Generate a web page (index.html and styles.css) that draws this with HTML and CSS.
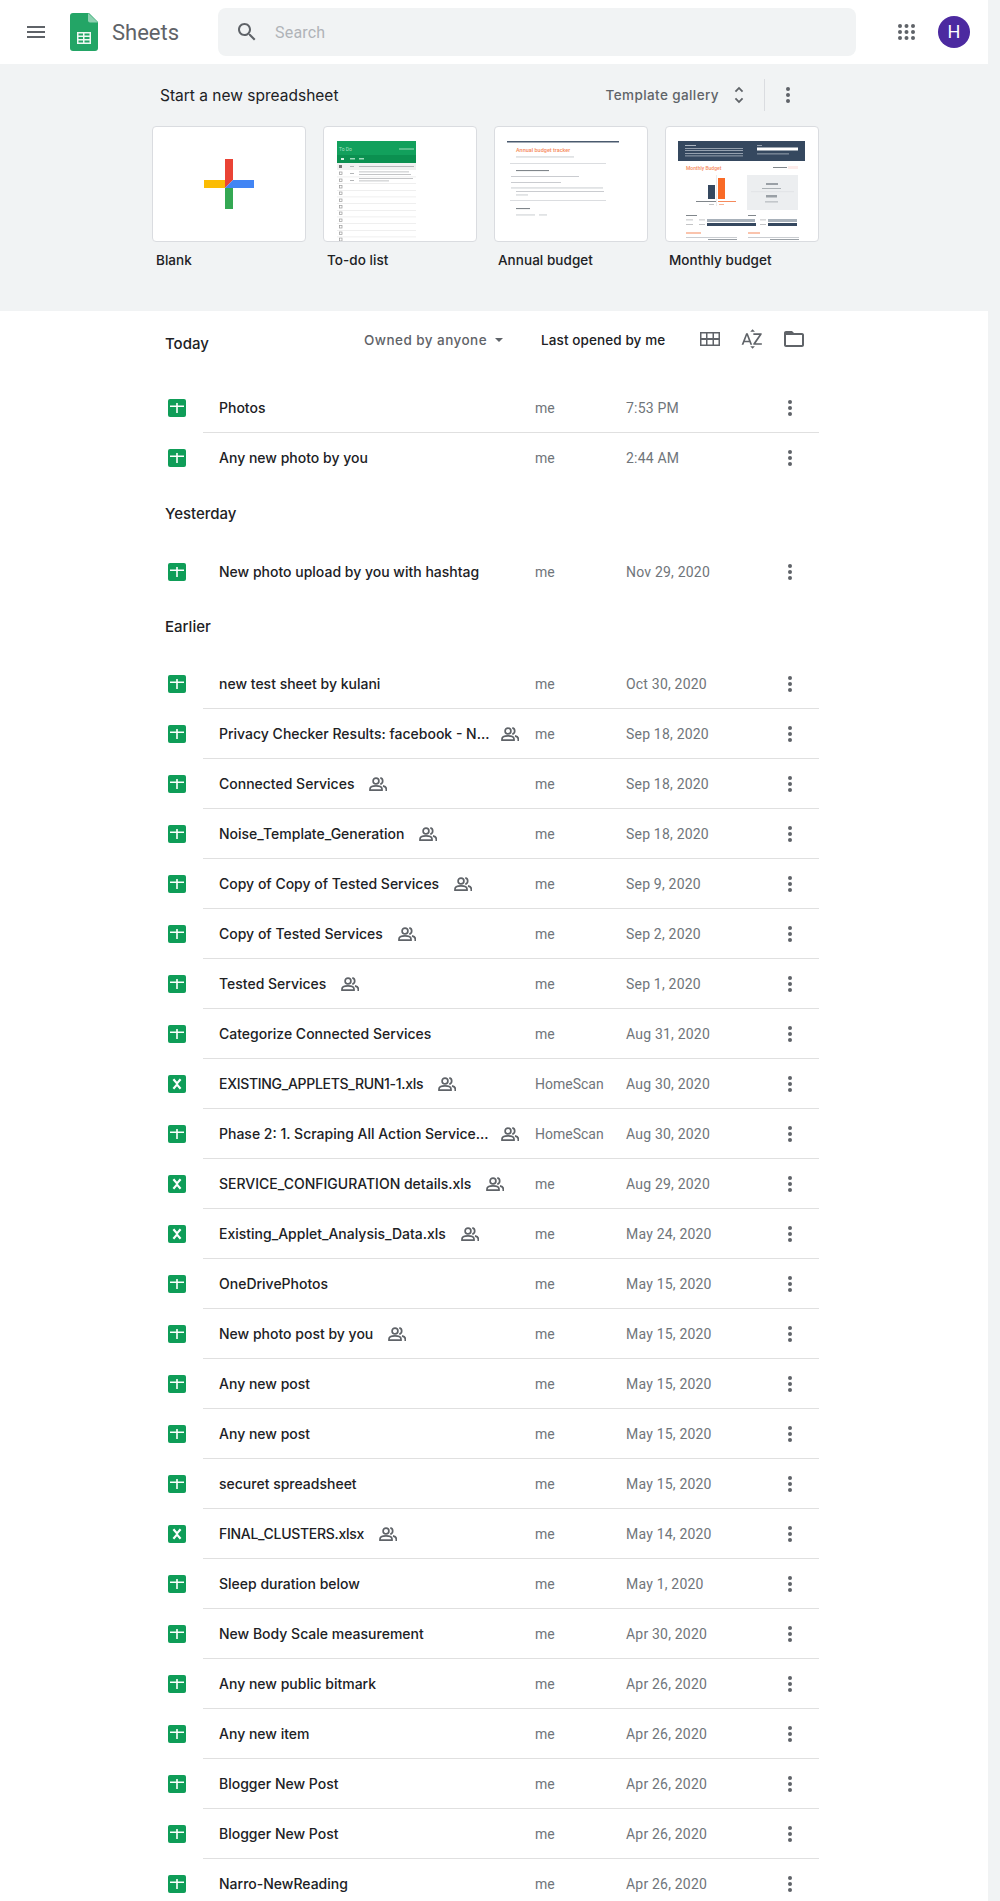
FILE: index.html
```html
<!DOCTYPE html>
<html lang="en">
<head>
    <meta charset="UTF-8">
    <title>Google Sheets</title>
    <link rel="stylesheet" href="styles.css">
</head>
<body>
    <svg class="defs" width="0" height="0">
        <symbol id="i-sheet" viewBox="0 0 18 18">
            <rect width="18" height="18" rx="2" fill="#0f9d58"/>
            <path d="M8.200 4h1.600v2.500H16v1.600H9.800V14H8.200V8.100H2V6.500h6.200z" fill="#fff"/>
        </symbol>
        <symbol id="i-excel" viewBox="0 0 18 18">
            <rect width="18" height="18" rx="2" fill="#0f9d58"/>
            <path d="M5.400 4.200l3.600 4.200 3.600-4.200M5.400 13.800l3.600-4.200 3.600 4.200" fill="none"/>
        </symbol>
        <symbol id="i-shared" viewBox="0 0 18 14">
            <g fill="none" stroke="#5f6368" stroke-width="1.700">
                <circle cx="7" cy="4" r="2.900"/>
                <path d="M1 13.100v-1.200c0-2 3-3.100 6-3.100s6 1.100 6 3.100v1.200z"/>
                <path d="M11.300.9a3.200 3.200 0 0 1 0 6.200"/>
                <path d="M14 8.900c2 .5 3.300 1.500 3.300 3V14"/>
            </g>
        </symbol>
        <symbol id="i-more" viewBox="0 0 4 16">
            <circle cx="2" cy="2" r="2" fill="#5f6368"/>
            <circle cx="2" cy="8" r="2" fill="#5f6368"/>
            <circle cx="2" cy="14" r="2" fill="#5f6368"/>
        </symbol>
    </svg>

    <div class="page">
        <header class="topbar">
            <svg class="menu-icon" viewBox="0 0 24 24"><path d="M3 18h18v-2H3v2zm0-5h18v-2H3v2zm0-7v2h18V6H3z"/></svg>
            <svg class="logo" viewBox="0 0 28 38">
                <path d="M3 0h16l9 9v26a3 3 0 0 1-3 3H3a3 3 0 0 1-3-3V3a3 3 0 0 1 3-3z" fill="#23a566"/>
                <path d="M18 0l10 9.500h-8a2 2 0 0 1-2-2z" fill="#8ed1b1"/>
                <path d="M7 19h14v12H7zm1.500 1.500v2h4.500v-2zm6 0v2h5v-2zm-6 3.500v2h4.500v-2zm6 0v2h5v-2zm-6 3.500v2h4.500v-2zm6 0v2h5v-2z" fill="#f1f8f4" fill-rule="evenodd"/>
            </svg>
            <span class="product">Sheets</span>
            <div class="search">
                <svg class="search-icon" viewBox="0 0 24 24"><path d="M15.500 14h-.79l-.28-.27C15.410 12.590 16 11.110 16 9.500 16 5.910 13.090 3 9.500 3S3 5.910 3 9.500 5.910 16 9.500 16c1.610 0 3.090-.59 4.230-1.570l.27.28v.79l5 4.990L20.490 19l-4.990-5zm-6 0C7.010 14 5 11.990 5 9.500S7.010 5 9.500 5 14 7.010 14 9.500 11.990 14 9.500 14z"/></svg>
                <span class="search-text">Search</span>
            </div>
            <svg class="apps-icon" viewBox="0 0 17 16">
                <circle cx="2" cy="2" r="2"/><circle cx="8.500" cy="2" r="2"/><circle cx="15" cy="2" r="2"/>
                <circle cx="2" cy="8" r="2"/><circle cx="8.500" cy="8" r="2"/><circle cx="15" cy="8" r="2"/>
                <circle cx="2" cy="14" r="2"/><circle cx="8.500" cy="14" r="2"/><circle cx="15" cy="14" r="2"/>
            </svg>
            <div class="avatar">H</div>
        </header>

        <section class="templates">
            <div class="templates-head">
                <span class="templates-title">Start a new spreadsheet</span>
                <span class="gallery">Template gallery</span>
                <svg class="unfold" viewBox="0 0 24 24"><path d="M12 5.830L15.170 9l1.410-1.410L12 3 7.410 7.590 8.830 9 12 5.830zm0 12.340L8.830 15l-1.410 1.410L12 21l4.590-4.590L15.170 15 12 18.170z"/></svg>
                <span class="head-divider"></span>
                <svg class="more head-more"><use href="#i-more"/></svg>
            </div>
            <div class="template-cards">
                <div class="template">
                    <div class="thumb">
                        <svg viewBox="-1 0 152 114">
                            <rect x="50" y="53" width="21" height="8" fill="#fbbc04"/>
                            <path d="M71 32h8v21l-8 8z" fill="#ea4335"/>
                            <rect x="71" y="61" width="8" height="21" fill="#34a853"/>
                            <path d="M79 53h21v8H71z" fill="#4285f4"/>
                        </svg>
                    </div>
                    <div class="template-name">Blank</div>
                </div>
                <div class="template">
                    <div class="thumb">
                        <svg viewBox="0 0 152 114">
                            <rect x="13" y="14" width="79" height="14" fill="#12a05c"/>
                            <rect x="13" y="28" width="79" height="8" fill="#0b9050"/>
                            <text x="15" y="24" class="mini" fill="#a9e0c3" font-size="5">To Do</text>
                            <rect x="75" y="21.500" width="15" height="1" fill="#9fdcbc"/>
                            <rect x="17" y="31" width="3" height="2" fill="#d9f0e3"/><rect x="26" y="31" width="5" height="1.500" fill="#9fdcbc"/><rect x="35" y="31" width="5" height="1.500" fill="#9fdcbc"/>
                            <rect x="13" y="36" width="79" height="7" fill="#f1f1f1"/>
                            <rect x="15" y="38" width="3" height="3" fill="#777"/>
                            <g fill="#b4b6b8">
                                <rect x="26" y="39" width="4" height="1"/><rect x="35" y="39" width="55" height="1"/>
                                <rect x="26" y="46" width="4" height="1"/><rect x="35" y="44.500" width="50" height=".8"/><rect x="35" y="47" width="52" height=".8"/>
                                <rect x="26" y="53" width="4" height="1"/><rect x="35" y="51" width="54" height=".8"/><rect x="35" y="53.500" width="30" height=".8"/>
                            </g>
                            <g fill="none" stroke="#999" stroke-width=".7">
                                <rect x="15.500" y="45" width="2.500" height="2.500"/><rect x="15.500" y="52" width="2.500" height="2.500"/><rect x="15.500" y="58.500" width="2.500" height="2.500"/><rect x="15.500" y="65" width="2.500" height="2.500"/><rect x="15.500" y="72" width="2.500" height="2.500"/><rect x="15.500" y="78.500" width="2.500" height="2.500"/><rect x="15.500" y="85" width="2.500" height="2.500"/><rect x="15.500" y="92" width="2.500" height="2.500"/><rect x="15.500" y="98.500" width="2.500" height="2.500"/><rect x="15.500" y="105" width="2.500" height="2.500"/><rect x="15.500" y="111" width="2.500" height="3"/>
                            </g>
                            <g fill="#ececec">
                                <rect x="13" y="49.500" width="79" height=".8"/><rect x="13" y="56" width="79" height=".8"/><rect x="13" y="63" width="79" height=".8"/><rect x="13" y="69.500" width="79" height=".8"/><rect x="13" y="76" width="79" height=".8"/><rect x="13" y="83" width="79" height=".8"/><rect x="13" y="89.500" width="79" height=".8"/><rect x="13" y="96" width="79" height=".8"/><rect x="13" y="103" width="79" height=".8"/><rect x="13" y="109.500" width="79" height=".8"/>
                            </g>
                        </svg>
                    </div>
                    <div class="template-name">To-do list</div>
                </div>
                <div class="template">
                    <div class="thumb">
                        <svg viewBox="0 0 152 114">
                            <rect x="12" y="14" width="112" height="1.500" fill="#4a5a6e"/>
                            <text x="21" y="25" class="mini" fill="#f58a5c" font-size="5.500" font-weight="500">Annual budget tracker</text>
                            <g fill="#c4c7cb">
                                <rect x="21" y="29.500" width="58" height=".9"/>
                                <rect x="15" y="36" width="96" height=".6"/>
                                <rect x="21" y="43" width="33" height="1.100" fill="#80868b"/>
                                <rect x="16" y="49" width="68" height=".9"/>
                                <rect x="16" y="55" width="50" height=".9"/>
                                <rect x="16" y="60.500" width="92" height=".9"/>
                                <rect x="21" y="64" width="88" height=".9"/>
                                <rect x="21" y="67.500" width="12" height=".9"/>
                                <rect x="15" y="73" width="96" height=".6"/>
                                <rect x="21" y="81" width="14" height="1.100" fill="#80868b"/>
                                <rect x="21" y="87.500" width="19" height=".9"/>
                                <rect x="44" y="87.500" width="8" height=".9"/>
                            </g>
                        </svg>
                    </div>
                    <div class="template-name">Annual budget</div>
                </div>
                <div class="template">
                    <div class="thumb">
                        <svg viewBox="0 0 152 114">
                            <rect x="12" y="14" width="127" height="20" fill="#35485f"/>
                            <g fill="#aeb7c2">
                                <rect x="19" y="18" width="11" height="1"/>
                                <rect x="19" y="21" width="58" height=".8"/><rect x="19" y="23" width="58" height=".8"/>
                                <rect x="19" y="26" width="58" height=".8"/><rect x="19" y="28.500" width="58" height=".8"/>
                                <rect x="91" y="18" width="5" height=".8"/><rect x="91" y="26.500" width="32" height=".8"/>
                            </g>
                            <rect x="91" y="20.500" width="41" height="3" fill="#fff"/>
                            <text x="20" y="43" class="mini" fill="#f58a5c" font-size="5" font-weight="500">Monthly Budget</text>
                            <rect x="107" y="40" width="14" height="1" fill="#80868b"/>
                            <rect x="122" y="39" width="10" height="3" fill="#fdecea"/>
                            <rect x="42" y="58" width="7" height="14" fill="#35485f"/>
                            <rect x="52" y="51" width="7" height="21" fill="#f96a26"/>
                            <rect x="50" y="48" width=".8" height="31" fill="#e8e8e8"/>
                            <rect x="30" y="74" width="20" height="1" fill="#80868b"/>
                            <rect x="52" y="74" width="18" height="1" fill="#f58a5c"/>
                            <rect x="43" y="77" width="5" height=".8" fill="#b4b6b8"/>
                            <rect x="53" y="77" width="5" height=".8" fill="#f4a27c"/>
                            <rect x="81" y="48" width="51" height="35" fill="#eceef0"/>
                            <g fill="#9aa0a6">
                                <rect x="100" y="56" width="12" height="2"/>
                                <rect x="96" y="61" width="19" height=".8"/>
                                <rect x="100" y="68" width="11" height="2.500"/>
                                <rect x="99" y="74.500" width="13" height=".8"/>
                            </g>
                            <rect x="85" y="64.500" width="43" height=".6" fill="#dadce0"/>
                            <rect x="20" y="88" width="11" height="1" fill="#80868b"/>
                            <rect x="82" y="88" width="8" height="1" fill="#80868b"/>
                            <g fill="#b4b6b8">
                                <rect x="20" y="92.500" width="7" height=".8"/><rect x="33" y="92.500" width="6" height=".8"/>
                                <rect x="20" y="97" width="7" height=".8"/><rect x="33" y="97" width="6" height=".8"/>
                                <rect x="82" y="92.500" width="7" height=".8"/><rect x="94" y="92.500" width="6" height=".8"/>
                                <rect x="82" y="97" width="6" height=".8"/><rect x="94" y="97" width="6" height=".8"/>
                            </g>
                            <rect x="41" y="92" width="48" height="3" fill="#a8b1ba"/>
                            <rect x="41" y="96" width="49" height="3" fill="#35485f"/>
                            <rect x="102" y="92" width="29" height="3" fill="#a8b1ba"/>
                            <rect x="102" y="96" width="29" height="3" fill="#35485f"/>
                            <rect x="20" y="105.500" width="15" height="1" fill="#f58a5c"/>
                            <rect x="82" y="105.500" width="12" height="1" fill="#f58a5c"/>
                            <rect x="20" y="110" width="51" height=".8" fill="#bdc1c6"/>
                            <rect x="82" y="110" width="51" height=".8" fill="#bdc1c6"/>
                            <rect x="42" y="112" width="29" height="1" fill="#9aa0a6"/>
                            <rect x="104" y="112" width="29" height="1" fill="#9aa0a6"/>
                        </svg>
                    </div>
                    <div class="template-name">Monthly budget</div>
                </div>
            </div>
        </section>

        <main class="files">
            <div class="list-bar">
                <span class="group-name">Today</span>
                <div class="controls">
                    <span class="owned">Owned by anyone</span>
                    <span class="caret"></span>
                    <span class="sort">Last opened by me</span>
                    <svg class="tool-grid" viewBox="0 0 20 14"><path d="M0 0h20v14H0zm1.500 1.500v4.500h4.500V1.500zm6 0v4.500h5V1.500zm6.500 0v4.500h4.500V1.500zM1.500 8v4.500h4.500V8zm6 0v4.500h5V8zm6.500 0v4.500h4.500V8z" fill-rule="evenodd"/></svg>
                    <svg class="tool-icon tool-az" viewBox="0 0 24 24"><path d="M14.940 4.660h-4.720l2.360-2.360zm-4.690 14.710h4.660l-2.330 2.330zM6.100 6.270L1.600 17.730h1.840l.92-2.450h5.110l.92 2.450h1.840L7.740 6.270H6.100zm-1.130 7.370l1.940-5.180 1.940 5.180H4.970zm10.760 2.500h6.120v1.590h-8.530v-1.290l5.920-8.560h-5.880v-1.600h8.300v1.260l-5.930 8.600z"/></svg>
                    <svg class="tool-icon tool-folder" viewBox="0 0 24 24"><path d="M20 6h-8l-2-2H4c-1.100 0-1.990.9-1.990 2L2 18c0 1.100.9 2 2 2h16c1.100 0 2-.9 2-2V8c0-1.100-.9-2-2-2zm0 12H4V8h16v10z"/></svg>
                </div>
            </div>

            <div class="row"><svg class="file-icon"><use href="#i-sheet"/></svg><div class="row-body"><div class="name-cell"><span class="name">Photos</span></div><span class="owner">me</span><span class="date">7:53 PM</span><svg class="more"><use href="#i-more"/></svg></div></div>
            <div class="row"><svg class="file-icon"><use href="#i-sheet"/></svg><div class="row-body"><div class="name-cell"><span class="name">Any new photo by you</span></div><span class="owner">me</span><span class="date">2:44 AM</span><svg class="more"><use href="#i-more"/></svg></div></div>

            <div class="group-head group-yesterday">Yesterday</div>
            <div class="row"><svg class="file-icon"><use href="#i-sheet"/></svg><div class="row-body"><div class="name-cell"><span class="name">New photo upload by you with hashtag</span></div><span class="owner">me</span><span class="date">Nov 29, 2020</span><svg class="more"><use href="#i-more"/></svg></div></div>

            <div class="group-head group-earlier">Earlier</div>
            <div class="row"><svg class="file-icon"><use href="#i-sheet"/></svg><div class="row-body"><div class="name-cell"><span class="name">new test sheet by kulani</span></div><span class="owner">me</span><span class="date">Oct 30, 2020</span><svg class="more"><use href="#i-more"/></svg></div></div>
            <div class="row"><svg class="file-icon"><use href="#i-sheet"/></svg><div class="row-body"><div class="name-cell"><span class="name">Privacy Checker Results: facebook - N...</span><svg class="shared"><use href="#i-shared"/></svg></div><span class="owner">me</span><span class="date">Sep 18, 2020</span><svg class="more"><use href="#i-more"/></svg></div></div>
            <div class="row"><svg class="file-icon"><use href="#i-sheet"/></svg><div class="row-body"><div class="name-cell"><span class="name">Connected Services</span><svg class="shared"><use href="#i-shared"/></svg></div><span class="owner">me</span><span class="date">Sep 18, 2020</span><svg class="more"><use href="#i-more"/></svg></div></div>
            <div class="row"><svg class="file-icon"><use href="#i-sheet"/></svg><div class="row-body"><div class="name-cell"><span class="name">Noise_Template_Generation</span><svg class="shared"><use href="#i-shared"/></svg></div><span class="owner">me</span><span class="date">Sep 18, 2020</span><svg class="more"><use href="#i-more"/></svg></div></div>
            <div class="row"><svg class="file-icon"><use href="#i-sheet"/></svg><div class="row-body"><div class="name-cell"><span class="name">Copy of Copy of Tested Services</span><svg class="shared"><use href="#i-shared"/></svg></div><span class="owner">me</span><span class="date">Sep 9, 2020</span><svg class="more"><use href="#i-more"/></svg></div></div>
            <div class="row"><svg class="file-icon"><use href="#i-sheet"/></svg><div class="row-body"><div class="name-cell"><span class="name">Copy of Tested Services</span><svg class="shared"><use href="#i-shared"/></svg></div><span class="owner">me</span><span class="date">Sep 2, 2020</span><svg class="more"><use href="#i-more"/></svg></div></div>
            <div class="row"><svg class="file-icon"><use href="#i-sheet"/></svg><div class="row-body"><div class="name-cell"><span class="name">Tested Services</span><svg class="shared"><use href="#i-shared"/></svg></div><span class="owner">me</span><span class="date">Sep 1, 2020</span><svg class="more"><use href="#i-more"/></svg></div></div>
            <div class="row"><svg class="file-icon"><use href="#i-sheet"/></svg><div class="row-body"><div class="name-cell"><span class="name">Categorize Connected Services</span></div><span class="owner">me</span><span class="date">Aug 31, 2020</span><svg class="more"><use href="#i-more"/></svg></div></div>
            <div class="row"><svg class="file-icon"><use href="#i-excel"/></svg><div class="row-body"><div class="name-cell"><span class="name name-caps">EXISTING_APPLETS_RUN1-1.xls</span><svg class="shared"><use href="#i-shared"/></svg></div><span class="owner">HomeScan</span><span class="date">Aug 30, 2020</span><svg class="more"><use href="#i-more"/></svg></div></div>
            <div class="row"><svg class="file-icon"><use href="#i-sheet"/></svg><div class="row-body"><div class="name-cell"><span class="name">Phase 2: 1. Scraping All Action Service...</span><svg class="shared"><use href="#i-shared"/></svg></div><span class="owner">HomeScan</span><span class="date">Aug 30, 2020</span><svg class="more"><use href="#i-more"/></svg></div></div>
            <div class="row"><svg class="file-icon"><use href="#i-excel"/></svg><div class="row-body"><div class="name-cell"><span class="name">SERVICE_CONFIGURATION details.xls</span><svg class="shared"><use href="#i-shared"/></svg></div><span class="owner">me</span><span class="date">Aug 29, 2020</span><svg class="more"><use href="#i-more"/></svg></div></div>
            <div class="row"><svg class="file-icon"><use href="#i-excel"/></svg><div class="row-body"><div class="name-cell"><span class="name">Existing_Applet_Analysis_Data.xls</span><svg class="shared"><use href="#i-shared"/></svg></div><span class="owner">me</span><span class="date">May 24, 2020</span><svg class="more"><use href="#i-more"/></svg></div></div>
            <div class="row"><svg class="file-icon"><use href="#i-sheet"/></svg><div class="row-body"><div class="name-cell"><span class="name">OneDrivePhotos</span></div><span class="owner">me</span><span class="date">May 15, 2020</span><svg class="more"><use href="#i-more"/></svg></div></div>
            <div class="row"><svg class="file-icon"><use href="#i-sheet"/></svg><div class="row-body"><div class="name-cell"><span class="name">New photo post by you</span><svg class="shared"><use href="#i-shared"/></svg></div><span class="owner">me</span><span class="date">May 15, 2020</span><svg class="more"><use href="#i-more"/></svg></div></div>
            <div class="row"><svg class="file-icon"><use href="#i-sheet"/></svg><div class="row-body"><div class="name-cell"><span class="name">Any new post</span></div><span class="owner">me</span><span class="date">May 15, 2020</span><svg class="more"><use href="#i-more"/></svg></div></div>
            <div class="row"><svg class="file-icon"><use href="#i-sheet"/></svg><div class="row-body"><div class="name-cell"><span class="name">Any new post</span></div><span class="owner">me</span><span class="date">May 15, 2020</span><svg class="more"><use href="#i-more"/></svg></div></div>
            <div class="row"><svg class="file-icon"><use href="#i-sheet"/></svg><div class="row-body"><div class="name-cell"><span class="name">securet spreadsheet</span></div><span class="owner">me</span><span class="date">May 15, 2020</span><svg class="more"><use href="#i-more"/></svg></div></div>
            <div class="row"><svg class="file-icon"><use href="#i-excel"/></svg><div class="row-body"><div class="name-cell"><span class="name name-caps">FINAL_CLUSTERS.xlsx</span><svg class="shared"><use href="#i-shared"/></svg></div><span class="owner">me</span><span class="date">May 14, 2020</span><svg class="more"><use href="#i-more"/></svg></div></div>
            <div class="row"><svg class="file-icon"><use href="#i-sheet"/></svg><div class="row-body"><div class="name-cell"><span class="name">Sleep duration below</span></div><span class="owner">me</span><span class="date">May 1, 2020</span><svg class="more"><use href="#i-more"/></svg></div></div>
            <div class="row"><svg class="file-icon"><use href="#i-sheet"/></svg><div class="row-body"><div class="name-cell"><span class="name">New Body Scale measurement</span></div><span class="owner">me</span><span class="date">Apr 30, 2020</span><svg class="more"><use href="#i-more"/></svg></div></div>
            <div class="row"><svg class="file-icon"><use href="#i-sheet"/></svg><div class="row-body"><div class="name-cell"><span class="name">Any new public bitmark</span></div><span class="owner">me</span><span class="date">Apr 26, 2020</span><svg class="more"><use href="#i-more"/></svg></div></div>
            <div class="row"><svg class="file-icon"><use href="#i-sheet"/></svg><div class="row-body"><div class="name-cell"><span class="name">Any new item</span></div><span class="owner">me</span><span class="date">Apr 26, 2020</span><svg class="more"><use href="#i-more"/></svg></div></div>
            <div class="row"><svg class="file-icon"><use href="#i-sheet"/></svg><div class="row-body"><div class="name-cell"><span class="name">Blogger New Post</span></div><span class="owner">me</span><span class="date">Apr 26, 2020</span><svg class="more"><use href="#i-more"/></svg></div></div>
            <div class="row"><svg class="file-icon"><use href="#i-sheet"/></svg><div class="row-body"><div class="name-cell"><span class="name">Blogger New Post</span></div><span class="owner">me</span><span class="date">Apr 26, 2020</span><svg class="more"><use href="#i-more"/></svg></div></div>
            <div class="row"><svg class="file-icon"><use href="#i-sheet"/></svg><div class="row-body"><div class="name-cell"><span class="name">Narro-NewReading</span></div><span class="owner">me</span><span class="date">Apr 26, 2020</span><svg class="more"><use href="#i-more"/></svg></div></div>
        </main>
    </div>
</body>
</html>
```

FILE: styles.css
```css
html, body {
    margin: 0;
    padding: 0;
    height: 100%;
    overflow: hidden;
}

body {
    font-family: 'Roboto', 'Liberation Sans', sans-serif;
    background-color: #f1f3f4;
    color: #202124;
}

.defs {
    display: block;
    height: 0;
}

.page {
    width: 988px;
}

/* top bar */
.topbar {
    display: flex;
    align-items: center;
    height: 64px;
    background-color: #ffffff;
    padding-left: 24px;
    box-sizing: border-box;
}

.menu-icon {
    width: 24px;
    height: 24px;
    fill: #5f6368;
    margin-right: 22px;
}

.logo {
    width: 28px;
    height: 38px;
    margin-right: 14px;
}

.product {
    width: 106px;
    font-size: 22px;
    color: #5f6368;
}

.search {
    display: flex;
    align-items: center;
    width: 638px;
    height: 48px;
    border-radius: 8px;
    background-color: #f1f3f4;
    padding-left: 17px;
    box-sizing: border-box;
}

.search-icon {
    width: 24px;
    height: 24px;
    fill: #5f6368;
    margin-right: 16px;
}

.search-text {
    font-size: 16px;
    color: #b0b3b8;
    letter-spacing: 0.2px;
}

.apps-icon {
    width: 17px;
    height: 16px;
    fill: #5f6368;
    margin-left: 42px;
}

.avatar {
    width: 32px;
    height: 32px;
    margin-left: 23px;
    border-radius: 50%;
    background-color: #4c2aa0;
    color: #ffffff;
    font-size: 18px;
    line-height: 32px;
    text-align: center;
}

/* templates */
.templates {
    height: 247px;
    padding-left: 153px;
    box-sizing: border-box;
}

.templates-head {
    display: flex;
    align-items: center;
    width: 665px;
    height: 32px;
    padding-top: 15px;
}

.templates-title {
    margin-left: 7px;
    font-family: 'Inter', sans-serif;
    font-size: 15.5px;
    flex: 1;
}

.gallery {
    font-family: 'Inter', sans-serif;
    font-size: 13.5px;
    font-weight: 500;
    letter-spacing: 0.4px;
    color: #5f6368;
}

.unfold {
    width: 22px;
    height: 22px;
    fill: #5f6368;
    margin-left: 9px;
    margin-right: 14px;
}

.head-divider {
    width: 1px;
    height: 32px;
    background-color: #dadce0;
    margin-right: 21px;
}

.head-more {
    margin-right: 28px;
}

.template-cards {
    display: flex;
    gap: 17px;
    margin-top: 15px;
    margin-left: -1px;
}

.template {
    width: 154px;
}

.thumb {
    height: 116px;
    box-sizing: border-box;
    background-color: #ffffff;
    border: 1px solid #dadce0;
    border-radius: 4px;
    overflow: hidden;
}

.thumb svg {
    display: block;
    width: 152px;
    height: 114px;
}

.mini {
    font-family: 'Roboto', sans-serif;
}

.template-name {
    margin-top: 8px;
    margin-left: 4px;
    font-family: 'Inter', sans-serif;
    font-size: 13.5px;
    font-weight: 500;
    letter-spacing: 0.05px;
    line-height: 20px;
}

/* file list */
.files {
    background-color: #ffffff;
    padding-left: 168px;
    padding-right: 169px;
    height: 1590px;
}

.list-bar {
    display: flex;
    align-items: center;
    height: 72px;
    box-sizing: border-box;
    padding: 16px 0 24px 0;
    margin-left: -3px;
}

.group-name,
.group-head {
    font-family: 'Inter', sans-serif;
    font-size: 15px;
    font-weight: 500;
}

.group-name {
    width: 199px;
}

.controls {
    display: flex;
    align-items: center;
    position: relative;
    top: -3px;
    font-family: 'Inter', sans-serif;
    font-size: 13.5px;
}

.owned {
    font-weight: 500;
    letter-spacing: 0.45px;
    color: #5f6368;
}

.caret {
    width: 0;
    height: 0;
    margin-left: 8px;
    border-left: 4px solid transparent;
    border-right: 4px solid transparent;
    border-top: 4px solid #5f6368;
}

.sort {
    margin-left: 38px;
    font-weight: 500;
    letter-spacing: 0.1px;
}

.tool-grid {
    width: 20px;
    height: 14px;
    fill: #5f6368;
    margin-left: 35px;
    margin-bottom: 2px;
}

.tool-icon {
    width: 24px;
    height: 24px;
    fill: #5f6368;
    margin-bottom: 2px;
}

.tool-az {
    margin-left: 20px;
}

.tool-folder {
    margin-left: 18px;
}

.group-head {
    line-height: 32px;
    margin-left: -3px;
}

.group-yesterday {
    height: 49px;
    padding-top: 15px;
}

.group-earlier {
    height: 48px;
    padding-top: 14px;
}

.row {
    display: flex;
    align-items: center;
    height: 50px;
}

.file-icon {
    width: 18px;
    height: 18px;
    margin-right: 17px;
    flex-shrink: 0;
}

#i-excel path {
    stroke: #ffffff;
    stroke-width: 2.2;
}

.row-body {
    display: flex;
    align-items: center;
    height: 50px;
    width: 616px;
    box-sizing: border-box;
    padding-left: 16px;
    border-bottom: 1px solid #e0e0e0;
}

.row:last-child .row-body,
.row:has(+ .group-head) .row-body {
    border-bottom: none;
}

.name-cell {
    display: flex;
    align-items: center;
    width: 316px;
    flex-shrink: 0;
}

.name {
    max-width: 267px;
    white-space: nowrap;
    font-family: 'Inter', sans-serif;
    font-size: 14px;
    font-weight: 500;
    line-height: 20px;
}

.name-caps {
    letter-spacing: -0.3px;
}

.shared {
    width: 18px;
    height: 14px;
    margin-left: 15px;
    flex-shrink: 0;
}

.owner {
    width: 91px;
    flex-shrink: 0;
    font-size: 14px;
    color: #70757a;
}

.date {
    width: 162px;
    flex-shrink: 0;
    font-size: 14px;
    letter-spacing: 0.2px;
    color: #70757a;
}

.more {
    width: 4px;
    height: 16px;
    flex-shrink: 0;
}
```
